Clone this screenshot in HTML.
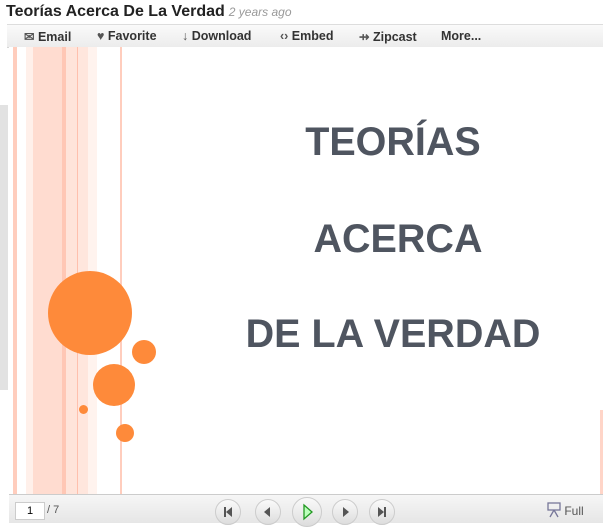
<!DOCTYPE html><html><head><style>
body{margin:0;width:603px;height:522px;overflow:hidden;background:#fff;font-family:"Liberation Sans",sans-serif;position:relative}
.a{position:absolute}
.t{left:6px;top:3px;font-size:16px;font-weight:bold;color:#222;white-space:nowrap}
.t i{font-weight:normal;font-size:12px;color:#999;margin-left:4px}
.bar{left:7px;top:24px;width:596px;height:22px;background:linear-gradient(#fafafa,#ececec);border-top:1px solid #ddd;border-bottom:1px solid #d6d6d6;font-size:12.5px;font-weight:bold;color:#333}
.bar span{position:absolute;top:4px;white-space:nowrap}
.bar b{color:#555}
.s{left:9px;top:47px;width:594px;height:447px;background:#fff}
.st{top:0;height:447px}
.h{width:600px;text-align:center;font-weight:bold;color:#4f5560;font-size:39.5px;white-space:nowrap}
.foot{left:9px;top:494px;width:594px;height:28px;background:linear-gradient(#f6f6f6,#e6e6e6);border-top:1px solid #ccc}
.btn{top:4px;width:24px;height:24px;border-radius:50%;background:linear-gradient(#fafafa,#ddd);border:1px solid #ccc}
.btn svg{position:absolute;left:0;top:0}
</style></head><body>
<div class="a" style="left:0;top:105px;width:8px;height:285px;background:#e2e2e2"></div>
<div class="a t">Teorías Acerca De La Verdad<i>2 years ago</i></div>
<div class="a bar">
<span style="left:17px"><b>✉</b> Email</span>
<span style="left:90px"><b>♥</b> Favorite</span>
<span style="left:175px"><b>↓</b> Download</span>
<span style="left:273px"><b>‹›</b> Embed</span>
<span style="left:352px"><b>⇸</b> Zipcast</span>
<span style="left:434px">More...</span>
</div>
<div class="a s">
<div class="a st" style="left:4px;width:4px;background:#ffcdbd"></div>
<div class="a st" style="left:17px;width:7px;background:#fff0ea"></div>
<div class="a st" style="left:24px;width:29px;background:#ffdcd0"></div>
<div class="a st" style="left:53px;width:4px;background:#ffc7b5"></div>
<div class="a st" style="left:57px;width:11px;background:#ffe4da"></div>
<div class="a st" style="left:68px;width:1px;background:#ffc0ad"></div>
<div class="a st" style="left:69px;width:10px;background:#ffe6dd"></div>
<div class="a st" style="left:79px;width:9px;background:#fff3ee"></div>
<div class="a st" style="left:111px;width:2px;background:#ffcdbd"></div>
<div class="a" style="left:591px;top:363px;width:3px;height:84px;background:#ffd5c8"></div>
</div>
<div class="a h" style="left:93px;top:120px">TEORÍAS</div>
<div class="a h" style="left:98px;top:217px">ACERCA</div>
<div class="a h" style="left:93px;top:312px">DE LA VERDAD</div>
<div class="a" style="left:48px;top:271px;width:84px;height:84px;border-radius:50%;background:#fe8a3a"></div>
<div class="a" style="left:132px;top:340px;width:24px;height:24px;border-radius:50%;background:#fe8a3a"></div>
<div class="a" style="left:93px;top:364px;width:42px;height:42px;border-radius:50%;background:#fe8a3a"></div>
<div class="a" style="left:79px;top:405px;width:9px;height:9px;border-radius:50%;background:#fe8a3a"></div>
<div class="a" style="left:116px;top:424px;width:18px;height:18px;border-radius:50%;background:#fe8a3a"></div>
<div class="a foot">
<div class="a" style="left:6px;top:7px;width:28px;height:16px;background:#fff;border:1px solid #ccc;font-size:11px;text-align:center;line-height:16px">1</div>
<div class="a" style="left:38px;top:9px;font-size:11px;color:#555">/ 7</div>
<div class="a btn" style="left:206px"><svg width="24" height="24"><rect x="8" y="7" width="2" height="10" fill="#555"/><path d="M16 7L10 12L16 17Z" fill="#555"/></svg></div>
<div class="a btn" style="left:246px"><svg width="24" height="24"><path d="M14 7L8 12L14 17Z" fill="#555"/></svg></div>
<div class="a btn" style="left:283px;top:2px;width:28px;height:28px"><svg width="28" height="28"><path d="M11 7L19 14L11 21Z" fill="#bfb" stroke="#292" stroke-width="1.3"/></svg></div>
<div class="a btn" style="left:323px"><svg width="24" height="24"><path d="M10 7L16 12L10 17Z" fill="#555"/></svg></div>
<div class="a btn" style="left:360px"><svg width="24" height="24"><path d="M8 7L14 12L8 17Z" fill="#555"/><rect x="14" y="7" width="2" height="10" fill="#555"/></svg></div>
<div class="a" style="left:538px;top:7px;font-size:12px;color:#555"><svg width="14" height="16" style="vertical-align:-3px"><rect x="1" y="1" width="12" height="7" fill="none" stroke="#779" stroke-width="1.3"/><path d="M7 8L3 15M7 8L11 15" stroke="#779" stroke-width="1.3"/></svg> Full</div>
</div>
</body></html>
